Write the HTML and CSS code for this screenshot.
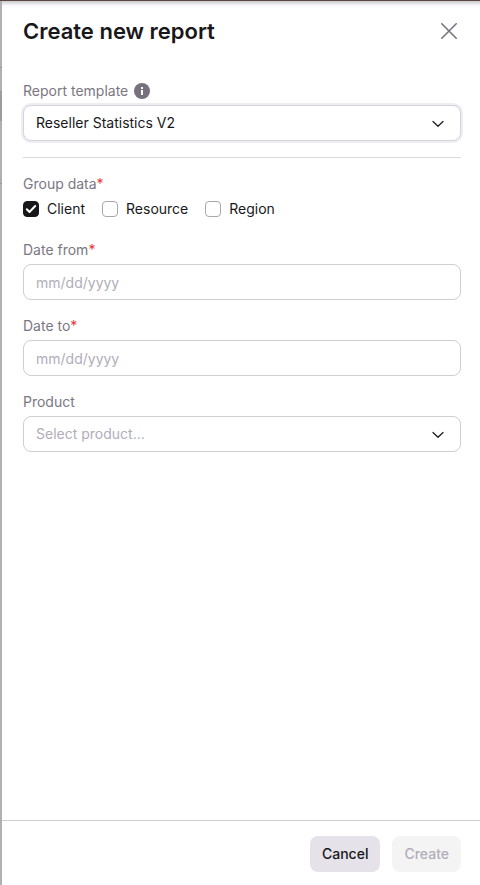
FILE: index.html
```html
<!DOCTYPE html>
<html lang="en">
<head>
    <meta charset="UTF-8">
    <meta name="viewport" content="width=device-width, initial-scale=1.0">
    <title>Create new report</title>
    <link rel="stylesheet" href="styles.css">
</head>
<body>

<div class="backdrop">
    <form class="drawer">
        <header class="drawer-header">
            <h1>Create new report</h1>
            <button type="button" class="close-btn" aria-label="Close">
                <svg width="16" height="16" viewBox="0 0 16 16" fill="none" stroke="currentColor" stroke-width="1.6" stroke-linecap="round">
                    <path d="M0.8 0.8L15.2 15.2M15.2 0.8L0.8 15.2"/>
                </svg>
            </button>
        </header>

        <div class="drawer-body">
            <div class="field">
                <div class="label-row">
                    <label for="template">Report template</label>
                    <svg class="info" width="16" height="16" viewBox="0 0 16 16">
                        <circle cx="8" cy="8" r="8" fill="currentColor"/>
                        <path d="M7 4h2v2H7zM7 7h2v5H7z" fill="#fff"/>
                    </svg>
                </div>
                <div class="select focused">
                    <select id="template">
                        <option selected>Reseller Statistics V2</option>
                    </select>
                    <svg class="chevron" width="12" height="8" viewBox="0 0 12 8" fill="none" stroke="currentColor" stroke-width="1.2" stroke-linecap="round" stroke-linejoin="round">
                        <path d="M1 1.5L6 6.3L11 1.5"/>
                    </svg>
                </div>
            </div>

            <hr>

            <fieldset class="group">
                <legend>Group data<span class="required">*</span></legend>
                <div class="checks">
                    <label><input type="checkbox" name="group" value="client" checked>Client</label>
                    <label><input type="checkbox" name="group" value="resource">Resource</label>
                    <label><input type="checkbox" name="group" value="region">Region</label>
                </div>
            </fieldset>

            <div class="field">
                <label for="date_from">Date from<span class="required">*</span></label>
                <input type="text" id="date_from" placeholder="mm/dd/yyyy">
            </div>

            <div class="field">
                <label for="date_to">Date to<span class="required">*</span></label>
                <input type="text" id="date_to" placeholder="mm/dd/yyyy">
            </div>

            <div class="field">
                <label for="product">Product</label>
                <div class="select">
                    <select id="product" class="empty">
                        <option selected>Select product...</option>
                    </select>
                    <svg class="chevron" width="12" height="8" viewBox="0 0 12 8" fill="none" stroke="currentColor" stroke-width="1.2" stroke-linecap="round" stroke-linejoin="round">
                        <path d="M1 1.5L6 6.3L11 1.5"/>
                    </svg>
                </div>
            </div>
        </div>

        <footer class="drawer-footer">
            <button type="button" class="btn">Cancel</button>
            <button type="submit" class="btn" disabled>Create</button>
        </footer>
    </form>
</div>

</body>
</html>
```

FILE: styles.css
```css
* {
    margin: 0;
    padding: 0;
    box-sizing: border-box;
}

body {
    font-family: Inter, 'Liberation Sans', sans-serif;
    font-size: 14px;
    line-height: 20px;
    color: #18181b;
}

input, select, button {
    font: inherit;
    color: inherit;
}

/* dimmed page behind the drawer, only its edge is visible */
.backdrop {
    min-height: 100vh;
    display: flex;
    padding-left: 2px;
    border-top: 1px solid #5c4545;
    background:
        linear-gradient(#999, #999) 0 66px / 2px 1px no-repeat,
        linear-gradient(#9c9c9c, #9c9c9c) 0 90px / 2px 30px no-repeat,
        linear-gradient(#999, #999) 0 182px / 2px 1px no-repeat,
        #b0b0b0;
}

.drawer {
    flex: 1;
    display: flex;
    flex-direction: column;
    background: linear-gradient(#cbc9ce, #fff 5px);
}

.drawer-header {
    display: flex;
    justify-content: space-between;
    align-items: center;
    padding: 14px 19px 14px 21px;
}

.drawer-header h1 {
    font-size: 22px;
    line-height: 32px;
    font-weight: 600;
}

.close-btn {
    display: flex;
    padding: 4px;
    border: none;
    background: none;
    color: #77747e;
    cursor: pointer;
}

.drawer-body {
    flex: 1;
    padding: 20px 19px 20px 21px;
}

.field {
    display: flex;
    flex-direction: column;
    gap: 4px;
    margin-bottom: 16px;
    color: #7b7782;
}

.label-row {
    display: flex;
    align-items: center;
    gap: 6px;
}

.info {
    color: #77717e;
}

.required {
    color: #e53935;
}

input[type="text"], select {
    width: 100%;
    height: 36px;
    padding: 0 12px;
    border: 1px solid #cfced2;
    border-radius: 8px;
    background: #fff;
    color: #18181b;
    outline: none;
    appearance: none;
}

input::placeholder, select.empty {
    color: #b1adb9;
    opacity: 1;
}

.select {
    position: relative;
    color: #18181b;
}

.focused select {
    border-color: #d5d3de;
    box-shadow: 0 0 0 2px #eeedf2;
}

.chevron {
    position: absolute;
    top: 15px;
    right: 17px;
    pointer-events: none;
}

hr {
    border: none;
    border-top: 1px solid #d9d9db;
    margin-bottom: 16px;
}

.group {
    border: none;
    margin-bottom: 21px;
}

.group legend {
    color: #7b7782;
}

.checks {
    display: flex;
    gap: 17px;
    padding-top: 5px;
}

.checks label {
    display: flex;
    align-items: center;
    gap: 8px;
}

input[type="checkbox"] {
    width: 16px;
    height: 16px;
    border: 1px solid #a9a5b3;
    border-radius: 4px;
    background: #fff;
    appearance: none;
}

input[type="checkbox"]:checked {
    border-color: #18181b;
    background: #18181b url("data:image/svg+xml,%3Csvg xmlns='http://www.w3.org/2000/svg' viewBox='0 0 14 14'%3E%3Cpath d='M2.8 7.3l2.7 2.7L11.2 4' fill='none' stroke='white' stroke-width='2' stroke-linecap='round' stroke-linejoin='round'/%3E%3C/svg%3E") center / 14px;
}

.drawer-footer {
    display: flex;
    justify-content: flex-end;
    gap: 12px;
    padding: 15px 19px 13px;
    border-top: 1px solid #cfced2;
}

.btn {
    height: 36px;
    padding: 0 12px;
    border: none;
    border-radius: 8px;
    background: #e5e3e9;
    font-weight: 500;
    cursor: pointer;
}

.btn:disabled {
    background: #f4f4f4;
    color: #b1adb9;
    cursor: default;
}
```
